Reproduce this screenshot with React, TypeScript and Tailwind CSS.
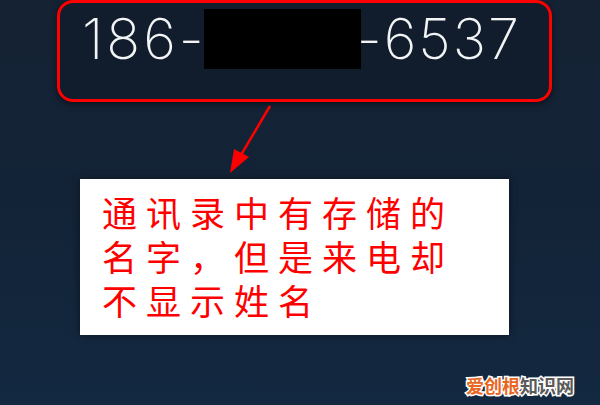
import React from "react";

export default function App() {
  return (
    <div
      className="relative w-[600px] h-[405px] overflow-hidden bg-gradient-to-b from-[#142233] via-[#132337] to-[#132941]"
      style={{ fontFamily: '"Liberation Sans", Arial, sans-serif' }}
    >
      <div className="ml-[57px] w-[495px] h-[102px] rounded-[16px] border-[3px] border-[#ff0000] bg-[#111d2c] pl-[22px] pt-[6px] shadow-[0_2px_6px_rgba(0,0,0,0.5)]">
        <div
          className="flex items-start text-[56px] leading-[60px] font-extralight text-[#f2f4f6] tracking-[3px]"
          style={{ fontFamily: 'Inter, "Liberation Sans", sans-serif' }}
        >
          <span>186-</span>
          <span className="inline-block w-[157px] h-[60px] bg-black -ml-[3px]" />
          <span className="-ml-[4px] tracking-[2px]">-6537</span>
        </div>
      </div>

      <div className="ml-[80px] mt-[77px] w-[429px] h-[156px] bg-white shadow-[0_0_8px_rgba(0,0,0,0.45)] pl-[22px] pt-[11px]">
        <p
          className="text-[35px] leading-[44px] text-[#ff0000] tracking-[9px]"
          style={{ fontFamily: '"Noto Sans CJK SC", sans-serif' }}
        >
          通讯录中有存储的
          <br />
          名字，但是来电却
          <br />
          不显示姓名
        </p>
      </div>

      <svg
        className="absolute left-0 top-0"
        width="600"
        height="405"
        viewBox="0 0 600 405"
      >
        <line x1="270" y1="106" x2="238" y2="160" stroke="#ff0000" strokeWidth="2.5" />
        <polygon points="230,173 234,149 249,157" fill="#ff0000" />
      </svg>

      <div
        className="absolute left-[466px] top-[373px] text-[18px] leading-[24px] font-bold [paint-order:stroke_fill] [-webkit-text-stroke:3px_white]"
        style={{ fontFamily: '"Noto Sans CJK SC", sans-serif' }}
      >
        <span className="text-[#e8661f]">爱创根</span>
        <span className="text-[#5a5a5a]">知识网</span>
      </div>
    </div>
  );
}
